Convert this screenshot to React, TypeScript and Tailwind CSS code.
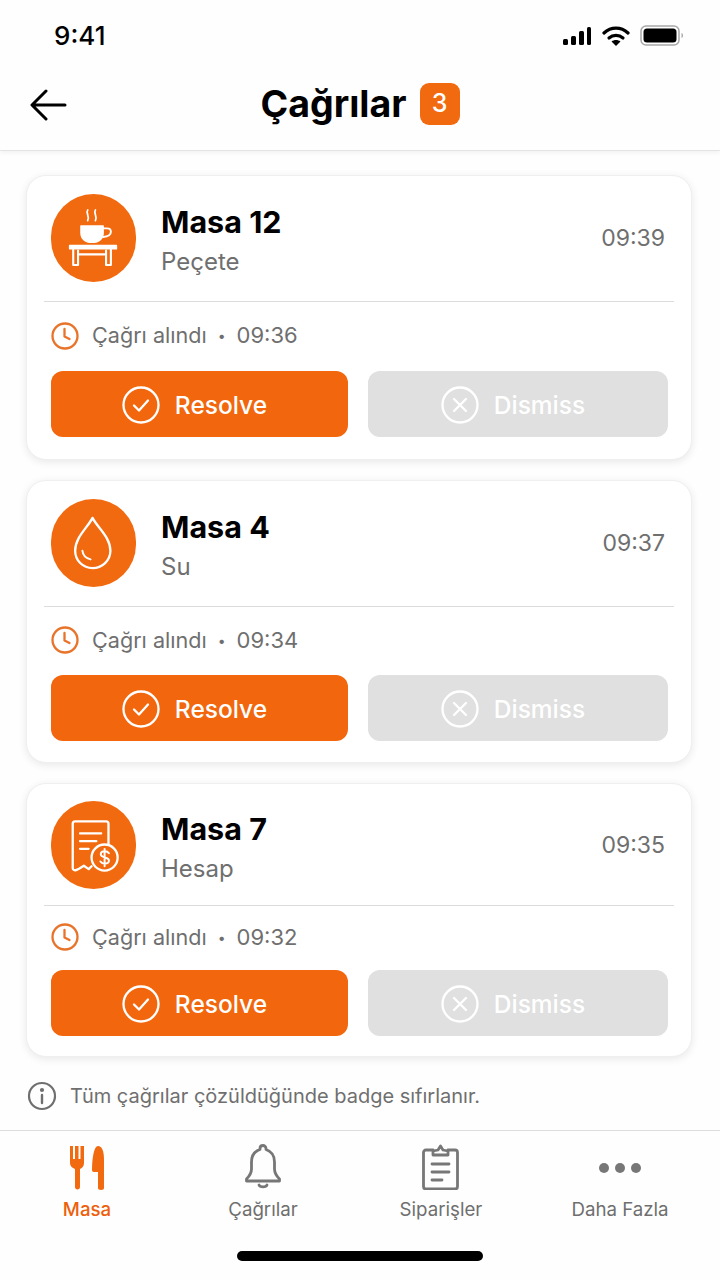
import { ReactNode } from "react";

const FONT = "font-['Inter','Liberation_Sans',sans-serif]";

function CupIcon() {
  return (
    <svg width="88" height="88" viewBox="0 0 88 88" fill="none" stroke="white" strokeLinecap="round" strokeLinejoin="round">
      <path d="M38 15c-2.500 3.500 2.500 6 0 11M46 15c-2.500 3.500 2.500 6 0 11" strokeWidth="1.800" />
      <path d="M31 31.500h23v7c0 6-4 10-11.500 10S31 44.500 31 38.500z" fill="white" strokeWidth="1.500" />
      <path d="M54 34h4c3 0 4 1.500 4 3.500 0 3-3 5-8 5.500" strokeWidth="2" />
      <path d="M19.500 52h48v3h-48z" fill="white" strokeWidth="2" />
      <path d="M23 56v16h5V61h29v11h5V56M28 61v-4M57 61v-4" strokeWidth="2.200" />
    </svg>
  );
}

function DropIcon() {
  return (
    <svg width="88" height="88" viewBox="0 0 88 88" fill="none" stroke="white" strokeLinecap="round" strokeLinejoin="round">
      <path d="M43 18c-5 10-18 20-18 34 0 10 8 18 18 18s18.500-8 18.500-18c0-14-13.500-24-18.500-34z" strokeWidth="2.400" />
      <path d="M32.500 52c.5 4.500 3.500 8 8.500 9" strokeWidth="2" />
    </svg>
  );
}

function ReceiptIcon() {
  return (
    <svg width="88" height="88" viewBox="0 0 88 88" fill="none" stroke="white" strokeLinecap="round" strokeLinejoin="round">
      <path d="M42 66l-3 3-5-3.500-5 3-3 1.500c-2 .5-3.500-.5-3.500-2V22c0-1.500 1-2.500 2.500-2.500h32c1.500 0 2.500 1 2.500 2.500v22" strokeWidth="2.400" />
      <path d="M30 32h22M30 40h17M30 48h9" strokeWidth="2.200" />
      <circle cx="55.500" cy="57" r="13.500" fill="#f26a0f" strokeWidth="2.400" />
      <path d="M60 52.500c-1-1.500-2.700-2-4.500-2-2.300 0-4 1.200-4 3.200 0 4.300 8.500 2.200 8.500 6.400 0 1.900-1.900 3.200-4.300 3.200-1.800 0-3.500-.7-4.500-2.300M55.500 48v18" strokeWidth="2" />
    </svg>
  );
}

function ClockIcon() {
  return (
    <svg width="28" height="28" viewBox="0 0 28 28" fill="none" stroke="#e8742b" strokeWidth="2.300" strokeLinecap="round" strokeLinejoin="round">
      <circle cx="14" cy="14" r="12.500" />
      <path d="M13.500 7v7.500l5 2.500" />
    </svg>
  );
}

function CheckCircle() {
  return (
    <svg width="38" height="38" viewBox="0 0 38 38" fill="none" stroke="white" strokeWidth="2.300" strokeLinecap="round" strokeLinejoin="round">
      <circle cx="19" cy="19" r="17.500" />
      <path d="M12 19.500l5 5 9-10" />
    </svg>
  );
}

function XCircle() {
  return (
    <svg width="38" height="38" viewBox="0 0 38 38" fill="none" stroke="white" strokeWidth="2.300" strokeLinecap="round">
      <circle cx="19" cy="19" r="17.500" />
      <path d="M13 13l12 12M25 13L13 25" />
    </svg>
  );
}

function CallCard({
  icon, table, request, time, received, top, mid, rowH, bottom,
}: {
  icon: ReactNode; table: string; request: string; time: string; received: string;
  top: string; mid: string; rowH: string; bottom: string;
}) {
  return (
    <div className={`ml-[26px] mr-[28px] rounded-[20px] bg-white border border-[#efefef] shadow-[0_2px_8px_rgba(0,0,0,0.09)] pl-[24px] pr-[23px] ${top} ${bottom}`}>
      <div className={`flex items-center ${mid}`}>
        <div className="w-[85px] h-[88px] rounded-full bg-[#f26a0f] flex items-center justify-center overflow-hidden shrink-0">{icon}</div>
        <div className="ml-[25px] flex-1 pt-[6px]">
          <div className="text-[30.500px] leading-[38px] -mt-[2px] font-bold text-black">{table}</div>
          <div className="text-[24px] leading-[30px] mt-[6px] text-[#6f6f6f]">{request}</div>
        </div>
        <div className="text-[23px] text-[#6f6f6f] mr-[3px]">{time}</div>
      </div>
      <div className="h-px bg-[#dcdcdc] ml-[-7px] mr-[-6px]" />
      <div className={`flex items-center pb-[2px] ${rowH}`}>
        <ClockIcon />
        <span className="ml-[13px] text-[21.600px] text-[#6f6f6f]">Çağrı alındı</span>
        <span className="ml-[11px] mr-[11px] text-[14px] text-[#6f6f6f]">•</span>
        <span className="text-[22px] text-[#6f6f6f]">{received}</span>
      </div>
      <div className="flex gap-[20px]">
        <button className="w-[297px] h-[66px] pt-[2px] pr-[10px] rounded-[12px] bg-[#f2660d] flex items-center justify-center gap-[15px] text-white text-[24.500px] font-medium">
          <CheckCircle />
          <span>Resolve</span>
        </button>
        <button className="w-[300px] h-[66px] pt-[2px] pr-[10px] rounded-[12px] bg-[#e0e0e0] flex items-center justify-center gap-[15px] text-white text-[24.500px] font-medium">
          <XCircle />
          <span>Dismiss</span>
        </button>
      </div>
    </div>
  );
}

export default function App() {
  return (
    <div className={`${FONT} w-[720px] h-[1280px] bg-[#fefefe] flex flex-col overflow-hidden`}>
      <div className="h-[70px] pt-[20px] pl-[54px] pr-[36px] flex items-start justify-between shrink-0">
        <span className="text-[26px] leading-[32px] font-medium text-black">9:41</span>
        <div className="flex items-center gap-[10px] mt-[5px]">
          <svg width="30" height="20" viewBox="0 0 30 20" fill="black">
            <rect x="1" y="13" width="5" height="6" rx="1.500" />
            <rect x="9" y="10" width="5" height="9" rx="1.500" />
            <rect x="17" y="5" width="5" height="14" rx="1.500" />
            <rect x="25" y="1" width="4" height="18" rx="1.500" />
          </svg>
          <svg width="28" height="22" viewBox="0 0 28 22" fill="none" stroke="black" strokeWidth="3.200" strokeLinecap="round">
            <path d="M2 8c7-6.500 17-6.500 24 0" />
            <path d="M7 13c4-3.500 10-3.500 14 0" />
            <path d="M14 21l-4.500-4.500c2.500-2 6.500-2 9 0z" fill="black" stroke="none" />
          </svg>
          <svg width="44" height="22" viewBox="0 0 44 22" fill="none">
            <rect x="1" y="1" width="38" height="19" rx="5" stroke="#a8a8a8" strokeWidth="1.500" />
            <rect x="3.500" y="3.500" width="33" height="14" rx="3.500" fill="black" />
            <path d="M41.500 8v5c1-.3 1.500-1.300 1.500-2.500S42.500 8.300 41.500 8z" fill="#a8a8a8" />
          </svg>
        </div>
      </div>

      <div className="h-[81px] relative flex items-center justify-center border-b border-[#e4e4e4] shadow-[0_2px_4px_rgba(0,0,0,0.05)] shrink-0 pb-[13px]">
        <svg className="absolute left-[29px] top-[17px]" width="40" height="34" viewBox="0 0 40 34" fill="none" stroke="black" strokeWidth="3" strokeLinecap="round" strokeLinejoin="round">
          <path d="M36 18H4M17 4L3 18l14 14" />
        </svg>
        <span className="text-[37.500px] leading-[44px] font-bold text-black">Çağrılar</span>
        <span className="ml-[13px] w-[40px] h-[42px] rounded-[9px] bg-[#f26a0f] text-white text-[25px] font-medium flex items-center justify-center">3</span>
      </div>

      <div className="flex-1 flex flex-col gap-[20px] pt-[24px]">
        <CallCard icon={<CupIcon />} table="Masa 12" request="Peçete" time="09:39" received="09:36" top="pt-[18px]" mid="pb-[19px]" rowH="h-[69px]" bottom="pb-[22px]" />
        <CallCard icon={<DropIcon />} table="Masa 4" request="Su" time="09:37" received="09:34" top="pt-[18px]" mid="pb-[19px]" rowH="h-[68px]" bottom="pb-[21px]" />
        <CallCard icon={<ReceiptIcon />} table="Masa 7" request="Hesap" time="09:35" received="09:32" top="pt-[17px]" mid="pb-[16px]" rowH="h-[64px]" bottom="pb-[20px]" />
        <div className="flex items-center pl-[27px] mt-[4px] text-[20px] text-[#6f6f6f]">
          <svg width="30" height="30" viewBox="0 0 30 30" fill="none" stroke="#6f6f6f" strokeWidth="2.200" strokeLinecap="round">
            <circle cx="15" cy="15" r="13" />
            <path d="M15 14v8" strokeWidth="2.400" />
            <circle cx="15" cy="9" r="1" fill="#6f6f6f" />
          </svg>
          <span className="ml-[13px]">Tüm çağrılar çözüldüğünde badge sıfırlanır.</span>
        </div>
      </div>

      <div className="h-[150px] border-t border-[#dedede] shrink-0 flex flex-col">
        <div className="grid grid-cols-[174px_178px_178px_180px] pt-[13px] text-[18.700px]">
          <div className="flex flex-col items-center text-[#ee5f0c] font-medium">
            <svg width="40" height="46" viewBox="0 0 40 46" fill="#f26a0f">
              <path d="M3 2h3v13h2V2h3.500v13h2V2H17v17c0 3-1.500 5-4 6v18c0 1.500-1 2.500-2.500 2.500S8 44.500 8 43V25c-3-1-5-3-5-6z" />
              <path d="M31 2c4 0 6 5 6 14v28c0 1-1 2-3 2s-3-1-3-2V28h-4c-1.500 0-2-1-2-2 0-12 2-24 6-24z" />
            </svg>
            <span className="mt-[7px] leading-[26px]">Masa</span>
          </div>
          <div className="flex flex-col items-center text-[#6f6f6f]">
            <svg width="40" height="46" viewBox="0 0 40 46" fill="none" stroke="#777777" strokeWidth="2.800" strokeLinecap="round" strokeLinejoin="round">
              <path d="M20 1.500c-1.500 0-3 1-3 3v1C11 7.500 8.500 12 8.500 18v7c0 4-2 7-5 10v2h33v-2c-3-3-5-6-5-10v-7c0-6-2.500-10.500-8.500-12.500v-1c0-2-1.500-3-3-3z" />
              <path d="M16 41c1 2.500 7 2.500 8 0" />
            </svg>
            <span className="mt-[7px] leading-[26px]">Çağrılar</span>
          </div>
          <div className="flex flex-col items-center text-[#6f6f6f]">
            <svg width="40" height="46" viewBox="0 0 40 46" fill="none" stroke="#777777" strokeWidth="2.800" strokeLinecap="round" strokeLinejoin="round">
              <path d="M12 6H5c-1.500 0-2.500 1-2.500 2.500v34c0 1.500 1 2.500 2.500 2.500h29c1.500 0 2.500-1 2.500-2.500v-34c0-1.500-1-2.500-2.500-2.500h-7" />
              <path d="M12 11V7l5-1 2.500-4 2.500 4 5 1v4z" />
              <path d="M11 20h17M11 28h17M11 36h10" />
            </svg>
            <span className="mt-[7px] leading-[26px]">Siparişler</span>
          </div>
          <div className="flex flex-col items-center text-[#6f6f6f]">
            <div className="h-[46px] flex items-center gap-[6px] pt-[2px]">
              <span className="w-[10px] h-[10px] rounded-full bg-[#777777]" />
              <span className="w-[10px] h-[10px] rounded-full bg-[#777777]" />
              <span className="w-[10px] h-[10px] rounded-full bg-[#777777]" />
            </div>
            <span className="mt-[7px] leading-[26px]">Daha Fazla</span>
          </div>
        </div>
        <div className="w-[246px] h-[10px] rounded-full bg-black mx-auto mt-[28px]" />
      </div>
    </div>
  );
}
